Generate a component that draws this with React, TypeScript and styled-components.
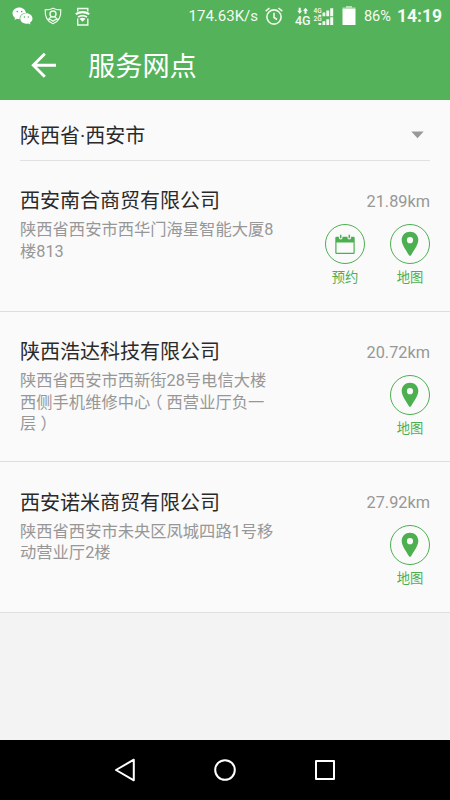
import React from 'react';
import styled, { createGlobalStyle } from 'styled-components';

const GREEN = '#4caf50';

const GlobalStyle = createGlobalStyle`
  * { box-sizing: border-box; }
  body {
    margin: 0;
    background: #f3f3f3;
    font-family: Roboto, "Noto Sans CJK SC", sans-serif;
  }
  svg { display: block; flex: none; overflow: visible; }
`;

const Screen = styled.div`
  width: 450px;
  height: 800px;
  display: flex;
  flex-direction: column;
  overflow: hidden;
  background: #f3f3f3;
`;

const StatusBar = styled.header`
  height: 32px;
  flex: none;
  display: flex;
  align-items: center;
  justify-content: space-between;
  padding: 0 8px 0 12px;
  background: #54b25a;
  color: #f4fbf2;
`;

const Notifications = styled.div`
  display: flex;
  align-items: center;
  gap: 12px;
`;

const Indicators = styled.div`
  display: flex;
  align-items: center;
`;

const StatusText = styled.span<{ $size: number; $width: number; $bold?: boolean; $gap?: number }>`
  width: ${p => p.$width}px;
  margin-right: ${p => p.$gap ?? 0}px;
  font-size: ${p => p.$size}px;
  line-height: 32px;
  font-weight: ${p => (p.$bold ? 700 : 400)};
  white-space: nowrap;
  display: flex;
  justify-content: flex-end;
`;

const IconSlot = styled.span<{ $gap: number }>`
  margin-right: ${p => p.$gap}px;
`;

const AppBar = styled.div`
  height: 68px;
  flex: none;
  display: flex;
  align-items: center;
  padding: 0 0 3px 31px;
  background: #54b25a;
  color: #fff;
`;

const Title = styled.h1`
  margin: 5px 0 0 31px;
  font-size: 27.2px;
  line-height: 40px;
  font-weight: 400;
`;

const Content = styled.main`
  flex: none;
  background: #fafafa;
`;

const RegionPicker = styled.div`
  height: 61px;
  margin: 0 20px;
  padding: 9px 6px 0 0;
  display: flex;
  align-items: center;
  justify-content: space-between;
  border-bottom: 1px solid #e1e1e1;
  color: #2a2a2a;
  font-size: 20px;
  line-height: 30px;
`;

const Region = styled.span`
  padding-top: 2px;
`;

const Branch = styled.section`
  height: 150.7px;
  display: flex;
  justify-content: space-between;
  padding: 24px 20px 0;
  border-bottom: 1px solid #dfdfdf;
`;

const Details = styled.div`
  width: 256px;
  padding-top: 1.3px;
`;

const Name = styled.h2`
  margin: 0;
  font-size: 20px;
  line-height: 30px;
  font-weight: 400;
  color: #2a2a2a;
  white-space: nowrap;
`;

const Address = styled.p`
  margin: 3px 0 0;
  font-size: 16.3px;
  line-height: 21.7px;
  color: #979797;
  white-space: pre-line;
`;

/* Full-width bracket whose glyph is centred in its cell. */
const Bracket = styled.span`
  display: inline-block;
  width: 1em;
  line-height: 1;
  text-align: center;
  font-feature-settings: "halt";
`;

const Side = styled.div`
  display: flex;
  flex-direction: column;
  align-items: flex-end;
`;

const Distance = styled.span`
  height: 39px;
  font-size: 16.3px;
  line-height: 33px;
  color: #979797;
`;

const Actions = styled.div`
  display: flex;
  gap: 25px;
`;

const Action = styled.div`
  width: 40px;
  display: flex;
  flex-direction: column;
  align-items: center;
  color: ${GREEN};
  font-size: 13.3px;
  line-height: 20px;
  white-space: nowrap;
`;

const Round = styled.span`
  width: 40px;
  height: 40px;
  margin-bottom: 4px;
  display: flex;
  align-items: center;
  justify-content: center;
  border: 1px solid ${GREEN};
  border-radius: 50%;
`;

const NavBar = styled.nav`
  height: 60px;
  flex: none;
  margin-top: auto;
  display: flex;
  align-items: center;
  justify-content: space-between;
  padding: 0 113px;
  background: #000;
`;

const WeChatIcon = () => (
  <svg width="21" height="18" viewBox="0 0 21 18">
    <path fill="#fff" d="M7.4.4C3.4.4.5 3 .5 6.3c0 1.900 1 3.500 2.600 4.600l-.6 2.200 2.400-1.300c.8.2 1.600.4 2.500.4h.3c-.5-3.700 2.400-6.300 6.300-6.300C13.300 2.700 10.900.4 7.400.4z" />
    <path fill="#fff" d="M14.300 6.300c-3.400 0-6 2.300-6 5.200s2.600 5.200 6 5.200c.7 0 1.400-.1 2-.3l2.200 1.200-.6-1.900c1.600-1 2.600-2.400 2.600-4.200 0-2.900-2.800-5.200-6.200-5.200z" />
    <g fill="#54b25a">
      <circle cx="5.200" cy="4.600" r=".8" /><circle cx="9.700" cy="4.600" r=".8" />
      <circle cx="12.400" cy="10" r=".7" /><circle cx="16.300" cy="10" r=".7" />
    </g>
  </svg>
);

const ShieldIcon = () => (
  <svg width="18" height="18" viewBox="1 0 18 18" fill="none" stroke="#eefbea" strokeWidth="1.200">
    <path d="M9 1.200C6.700 2.500 4 2.800 1.200 2.800c-.3 6.500 1.200 11.600 7.800 14 6.600-2.400 8.100-7.500 7.800-14C14 2.800 11.300 2.500 9 1.200z" />
    <circle cx="9" cy="7" r="3" strokeWidth="1.400" />
    <path d="M7.500 9.500 4.500 12.200c2 .2 3.400.8 4.500 2.200 1.100-1.400 2.500-2 4.500-2.200l-3-2.700" />
  </svg>
);

const HotspotIcon = () => (
  <svg width="15" height="19" viewBox="0 0 15 19">
    <path fill="none" stroke="#eefbea" strokeWidth="1.400" d="M2.700 4.500V1.500h10.100v3M2.700 11.500V18h10.100v-6.500" />
    <path fill="none" stroke="#fff" strokeWidth="2.200" d="M.8 7.200c4-2.600 9.400-2.600 13.400 0" />
    <path fill="none" stroke="#fff" strokeWidth="1.700" d="M3 10c2.800-1.800 6.200-1.800 9 0" />
    <path fill="#fff" d="M4.500 11.700c1.900-1.200 4.100-1.200 6 0l-3 3z" />
  </svg>
);

const AlarmIcon = () => (
  <svg width="18" height="19" viewBox="0 0 18 19" fill="none" stroke="#eefbea" strokeWidth="1.600">
    <circle cx="9" cy="10" r="7.100" />
    <path d="M.7 4.200 4.500 1M17.300 4.200l-3.800-3.200M9 5.800v4.700l3 2" />
  </svg>
);

const StatusSvgText = styled.text`
  font-family: Roboto, sans-serif;
  font-weight: 500;
  fill: #f4fbf2;
`;

const DataIcon = () => (
  <svg width="16" height="19" viewBox="0 0 16 19">
    <path fill="#fff" d="M3.700.7h2v3h1.500L4.700 6.700 2.200 3.700h1.500zM9.500 6.700h2v-3H13L10.500.7 8 3.700h1.500z" />
    <StatusSvgText x="0" y="17.700" fontSize="12.500" textLength="15.500">4G</StatusSvgText>
  </svg>
);

const SignalIcon = () => (
  <svg width="20" height="19" viewBox="0 0 20 19">
    <StatusSvgText x="-.5" y="6" fontSize="6.500">4G</StatusSvgText>
    <StatusSvgText x="-.5" y="14.200" fontSize="6.500">2G</StatusSvgText>
    <path fill="#f4fbf2" d="M4.500 7.700h2.800v1.500H4.500zM8.500 5.500h2.800v3.700H8.500zM12.300 3.500h2.900v5.700h-2.900zM16.200 1.200h3v8h-3zM4.500 16h2.800v2H4.500zM8.500 14.300h2.800V18H8.500zM12.300 12.300h2.900V18h-2.900zM16.200 10.200h3V18h-3z" />
  </svg>
);

const BatteryIcon = () => (
  <svg width="14" height="20" viewBox="0 0 14 20">
    <path fill="#b9dfb9" d="M4 0h6v1.500h3.500V3H.5V1.500H4z" />
    <path fill="#fff" d="M.5 3h13v16H.5z" />
  </svg>
);

const BackArrow = () => (
  <svg width="26" height="26" viewBox="0 0 26 26" fill="none" stroke="#fff" strokeWidth="2.900">
    <path d="M25 13.300H3M13.800 1.700 2.300 13.300l11.500 11.500" />
  </svg>
);

const CalendarIcon = () => (
  <svg width="20" height="20" viewBox="0 0 20 20">
    <path fill={GREEN} fillRule="evenodd" d="M1.500 2.700h2.400v1.100a1.800 1.800 0 0 0 3.600 0V2.700h5v1.100a1.800 1.800 0 0 0 3.600 0V2.700h2.400q1.200 0 1.200 1.200v14.900q0 1.200-1.200 1.200h-17Q.3 20 .3 18.800V3.900Q.3 2.700 1.500 2.700zm0 5.900v10.200h17V8.600z" />
    <path stroke={GREEN} strokeWidth="1.500" d="M5.700.8v3.500M14.300.8v3.500" />
  </svg>
);

const PinIcon = () => (
  <svg width="18" height="26" viewBox="0 0 18 26">
    <path fill={GREEN} fillRule="evenodd" d="M9 .8C4.300.8.7 4.300.7 8.900.7 14 5.500 19.500 7.500 23.500q1.500 2.800 3 0c2-4 6.800-9.500 6.800-14.600C17.300 4.300 13.700.8 9 .8zm0 5.300a3.100 3.100 0 1 1 0 6.200 3.100 3.100 0 0 1 0-6.200z" />
  </svg>
);

const CaretIcon = () => (
  <svg width="13" height="8" viewBox="0 0 13 8"><path fill="#999" d="M.3.500h12.400L6.500 7.300z" /></svg>
);

const branches = [
  {
    name: '西安南合商贸有限公司',
    distance: '21.89km',
    booking: true,
    address: <>{'陕西省西安市西华门海星智能大厦8\n楼813'}</>,
  },
  {
    name: '陕西浩达科技有限公司',
    distance: '20.72km',
    booking: false,
    address: (
      <>
        {'陕西省西安市西新街28号电信大楼\n西侧手机维修中心'}
        <Bracket>（</Bracket>
        {'西营业厅负一\n层'}
        <Bracket>）</Bracket>
      </>
    ),
  },
  {
    name: '西安诺米商贸有限公司',
    distance: '27.92km',
    booking: false,
    address: <>{'陕西省西安市未央区凤城四路1号移\n动营业厅2楼'}</>,
  },
];

export default function App() {
  return (
    <Screen>
      <GlobalStyle />
      <StatusBar>
        <Notifications>
          <WeChatIcon />
          <ShieldIcon />
          <HotspotIcon />
        </Notifications>
        <Indicators>
          <StatusText $size={15} $width={70} $gap={7}>174.63K/s</StatusText>
          <IconSlot $gap={12}><AlarmIcon /></IconSlot>
          <IconSlot $gap={3}><DataIcon /></IconSlot>
          <IconSlot $gap={8}><SignalIcon /></IconSlot>
          <IconSlot $gap={6}><BatteryIcon /></IconSlot>
          <StatusText $size={14.600} $width={29} $gap={7}>86%</StatusText>
          <StatusText $size={17.500} $width={44} $bold>14:19</StatusText>
        </Indicators>
      </StatusBar>
      <AppBar>
        <BackArrow />
        <Title>服务网点</Title>
      </AppBar>
      <Content>
        <RegionPicker>
          <Region>陕西省·西安市</Region>
          <CaretIcon />
        </RegionPicker>
        {branches.map(b => (
          <Branch key={b.name}>
            <Details>
              <Name>{b.name}</Name>
              <Address>{b.address}</Address>
            </Details>
            <Side>
              <Distance>{b.distance}</Distance>
              <Actions>
                {b.booking && (
                  <Action><Round><CalendarIcon /></Round>预约</Action>
                )}
                <Action><Round><PinIcon /></Round>地图</Action>
              </Actions>
            </Side>
          </Branch>
        ))}
      </Content>
      <NavBar>
        <svg width="24" height="26" viewBox="0 0 24 26" fill="none" stroke="#fff" strokeWidth="2" strokeLinejoin="round">
          <path d="M20.800 2.700v20.600L3 13z" />
        </svg>
        <svg width="24" height="24" viewBox="0 0 24 24" fill="none" stroke="#fff" strokeWidth="2">
          <circle cx="12" cy="12" r="9.800" />
        </svg>
        <svg width="24" height="24" viewBox="0 0 24 24" fill="none" stroke="#fff" strokeWidth="2" strokeLinejoin="round">
          <rect x="3" y="3" width="18" height="18" />
        </svg>
      </NavBar>
    </Screen>
  );
}
